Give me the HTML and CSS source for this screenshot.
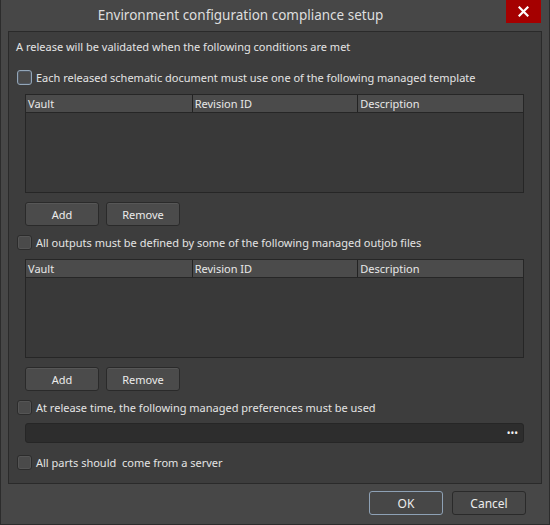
FILE: index.html
```html
<!DOCTYPE html>
<html lang="en">
<head>
  <meta charset="UTF-8" />
  <title>Environment configuration compliance setup</title>
  <link rel="stylesheet" href="styles.css">
</head>
<body>

<div class="dialog">
  <!-- Title bar -->
  <div class="titlebar">
    <span class="title">Environment configuration compliance setup</span>
    <span class="closebtn">
      <svg width="11" height="11" viewBox="0 0 11 11">
        <path d="M1.5 1.5 L9.5 9.5 M9.5 1.5 L1.5 9.5" stroke="#fff" stroke-width="2.2" stroke-linecap="square"/>
      </svg>
    </span>
  </div>

  <!-- Main panel -->
  <div class="panel">
    <div class="intro">A release will be validated when the following conditions are met</div>

    <label class="check-row first">
      <span class="checkbox focused"></span>
      <span>Each released schematic document must use one of the following managed template</span>
    </label>

    <div class="grid-table">
      <div class="grid-head">
        <span>Vault</span>
        <span>Revision ID</span>
        <span>Description</span>
      </div>
      <div class="grid-body"></div>
    </div>

    <div class="button-row">
      <button class="btn">Add</button>
      <button class="btn">Remove</button>
    </div>

    <label class="check-row">
      <span class="checkbox"></span>
      <span>All outputs must be defined by some of the following managed outjob files</span>
    </label>

    <div class="grid-table">
      <div class="grid-head">
        <span>Vault</span>
        <span>Revision ID</span>
        <span>Description</span>
      </div>
      <div class="grid-body"></div>
    </div>

    <div class="button-row">
      <button class="btn">Add</button>
      <button class="btn">Remove</button>
    </div>

    <label class="check-row">
      <span class="checkbox"></span>
      <span>At release time, the following managed preferences must be used</span>
    </label>

    <div class="pref-field">
      <span class="dots">&bull;&bull;&bull;</span>
    </div>

    <label class="check-row last">
      <span class="checkbox"></span>
      <span>All parts should&nbsp; come from a server</span>
    </label>
  </div>

  <!-- Footer -->
  <div class="footer">
    <button class="btn btn-footer default">OK</button>
    <button class="btn btn-footer">Cancel</button>
  </div>
</div>

</body>
</html>
```

FILE: styles.css
```css
/* Global styles */
body {
  margin: 0;
  background-color: #474747;
  font-family: 'Noto Sans', 'Open Sans', sans-serif;
  font-size: 11px;
  color: #e4e4e4;
}

.dialog {
  width: 550px;
  height: 525px;
  box-sizing: border-box;
  background-color: #474747;
  border: 1px solid #2c2c2c;
  border-top: none;
  display: flex;
  flex-direction: column;
}

.titlebar {
  position: relative;
  height: 31px;
  display: flex;
  align-items: center;
  justify-content: center;
  flex-shrink: 0;
}

.title {
  font-size: 13.5px;
  color: #dedede;
  margin-left: -69px;
  margin-top: -1px;
}

.closebtn {
  position: absolute;
  top: 0;
  right: 8px;
  width: 35px;
  height: 23px;
  background-color: #a50000;
  display: flex;
  align-items: center;
  justify-content: center;
}

.panel {
  margin: 0 7px 0 7px;
  height: 453px;
  box-sizing: border-box;
  background-color: #3d3d3d;
  border: 1px solid #2a2a2a;
  padding: 5px 17px 0 7px;
  display: flex;
  flex-direction: column;
}

.intro {
  height: 20px;
  line-height: 20px;
}

.check-row {
  display: flex;
  align-items: center;
  gap: 4px;
  height: 16px;
  margin-top: 8px;
  margin-left: 1px;
}

.check-row.first {
  margin-top: 12px;
}

.check-row.last {
  margin-top: 11px;
}

.checkbox {
  width: 13px;
  height: 13px;
  border: 1px solid #2c2c2c;
  border-radius: 3px;
  background-color: #4a4a4a;
  box-shadow: inset 0 0 0 1px #555;
  flex-shrink: 0;
}

.checkbox.focused {
  border-color: #93a6b8;
  box-shadow: inset 0 0 0 1px #4f5660;
}

/* Tables */
.grid-table {
  margin-top: 9px;
  margin-left: 9px;
  height: 99px;
  box-sizing: border-box;
  border: 1px solid #262626;
  background-color: #393939;
  display: flex;
  flex-direction: column;
}

.grid-head {
  height: 18px;
  box-sizing: border-box;
  background-color: #4b4b4b;
  border-bottom: 1px solid #262626;
  display: grid;
  grid-template-columns: 1fr 1fr 1fr;
}

.grid-head span {
  line-height: 17px;
  padding-left: 2px;
  border-left: 1px solid #222;
  color: #e8e8e8;
}

.grid-head span:first-child {
  border-left: none;
}

.grid-body {
  flex: 1;
}

/* Buttons */
.button-row {
  display: flex;
  gap: 7px;
  margin-top: 9px;
  margin-left: 9px;
}

.btn {
  width: 74px;
  height: 24px;
  box-sizing: border-box;
  background-color: #4b4b4b;
  border: 1px solid #2a2a2a;
  border-radius: 3px;
  box-shadow: inset 0 1px 0 #575757;
  color: #ececec;
  font-family: 'Noto Sans', 'Open Sans', sans-serif;
  font-size: 11px;
  padding: 0;
}

.button-row + .check-row {
  margin-top: 8px;
}

.pref-field {
  margin-top: 8px;
  margin-left: 9px;
  height: 20px;
  box-sizing: border-box;
  background-color: #2d2d2d;
  border: 1px solid #262626;
  border-radius: 3px;
  display: flex;
  align-items: center;
  justify-content: flex-end;
  padding-right: 5px;
}

.dots {
  color: #f2f2f2;
  font-size: 10px;
}

/* Footer */
.footer {
  display: flex;
  justify-content: flex-end;
  gap: 9px;
  padding: 7px 23px 0 0;
}

.btn-footer {
  font-size: 12px;
  background-color: #474747;
  box-shadow: none;
  border-color: #2a2a2a;
}

.btn-footer.default {
  border-color: #8ea1b5;
}
```
